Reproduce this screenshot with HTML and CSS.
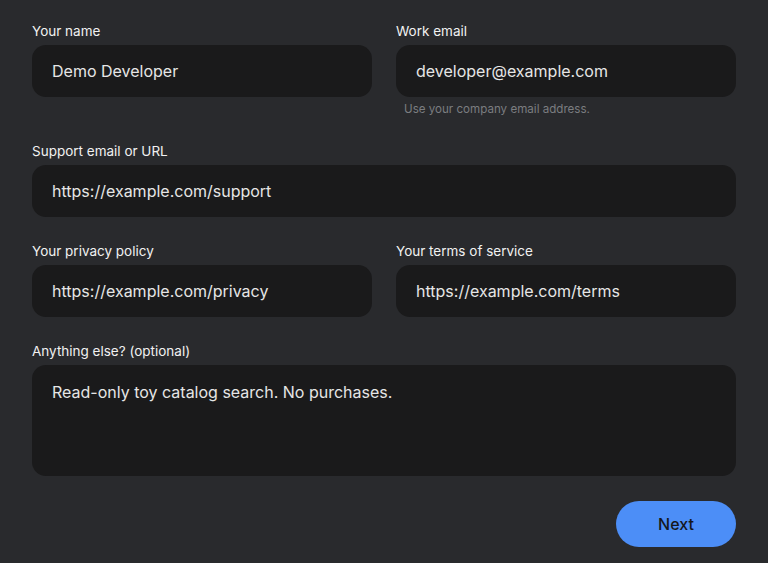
FILE: index.html
```html
<!DOCTYPE html>
<html lang="en">
<head>
<meta charset="utf-8">
<link rel="stylesheet" href="styles.css">
</head>
<body>
<form class="form">
  <div class="row two">
    <div class="field">
      <label class="label">Your name</label>
      <div class="input">Demo Developer</div>
    </div>
    <div class="field">
      <label class="label">Work email</label>
      <div class="input">developer@example.com</div>
      <div class="help">Use your company email address.</div>
    </div>
  </div>
  <div class="row">
    <div class="field">
      <label class="label">Support email or URL</label>
      <div class="input">https://example.com/support</div>
    </div>
  </div>
  <div class="row two">
    <div class="field">
      <label class="label">Your privacy policy</label>
      <div class="input">https://example.com/privacy</div>
    </div>
    <div class="field">
      <label class="label">Your terms of service</label>
      <div class="input">https://example.com/terms</div>
    </div>
  </div>
  <div class="row">
    <div class="field">
      <label class="label">Anything else? (optional)</label>
      <div class="input area">Read-only toy catalog search. No purchases.</div>
    </div>
  </div>
  <div class="actions">
    <button type="button" class="btn">Next</button>
  </div>
</form>
</body>
</html>
```
FILE: styles.css
```css
html, body {
  margin: 0;
  padding: 0;
  background: #292a2d;
}
body {
  font-family: Inter, "Noto Sans", sans-serif;
  color: #ececec;
}
.form {
  padding: 21px 32px 0 32px;
  display: flex;
  flex-direction: column;
  gap: 24px;
}
.row {
  display: grid;
  grid-template-columns: 1fr;
  column-gap: 24px;
}
.row.two {
  grid-template-columns: 1fr 1fr;
}
.field {
  display: flex;
  flex-direction: column;
}
.label {
  font-size: 13.5px;
  line-height: 20px;
  font-weight: 400;
  color: #f1f1f1;
  margin-bottom: 4px;
}
.input {
  height: 52px;
  box-sizing: border-box;
  background: #1a1a1b;
  border-radius: 14px;
  padding: 0 20px;
  display: flex;
  align-items: center;
  font-size: 16px;
  color: #e6e6e6;
}
.input.area {
  height: 111px;
  align-items: flex-start;
  padding-top: 17px;
  line-height: 20px;
}
.help {
  font-size: 11.6px;
  line-height: 14px;
  color: #7b7d80;
  margin-top: 5px;
  padding-left: 8px;
  height: 14px;
  margin-bottom: -21px;
}
.row.two:first-child {
  margin-bottom: 20px;
}
.actions {
  display: flex;
  justify-content: flex-end;
  padding-top: 1px;
}
.btn {
  width: 120px;
  height: 46px;
  border: none;
  border-radius: 23px;
  background: #4c8ef7;
  color: #15181d;
  font-family: Inter, "Noto Sans", sans-serif;
  font-size: 16px;
  font-weight: 500;
}
```
